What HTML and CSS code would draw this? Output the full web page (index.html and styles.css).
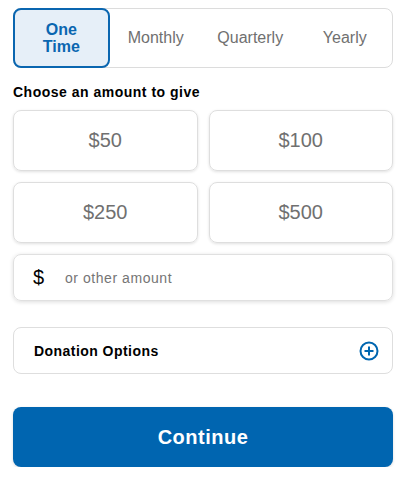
FILE: index.html
```html
<!DOCTYPE html>
<html>
<head>
<meta charset="utf-8">
<link rel="stylesheet" href="styles.css">
</head>
<body>
<div class="page">
  <div class="tabs">
    <div class="tab active">One<br>Time</div>
    <div class="tab">Monthly</div>
    <div class="tab">Quarterly</div>
    <div class="tab">Yearly</div>
  </div>
  <div class="heading">Choose an amount to give</div>
  <div class="amounts">
    <div class="amount">$50</div>
    <div class="amount">$100</div>
    <div class="amount">$250</div>
    <div class="amount">$500</div>
  </div>
  <div class="other">
    <span class="dollar">$</span>
    <span class="placeholder">or other amount</span>
  </div>
  <div class="options">
    <span class="options-label">Donation Options</span>
    <svg class="plus" width="20" height="20" viewBox="0 0 20 20">
      <circle cx="10" cy="10" r="8.5" fill="none" stroke="#0066b0" stroke-width="2"/>
      <path d="M10 5.5v9M5.5 10h9" stroke="#0066b0" stroke-width="2" fill="none"/>
    </svg>
  </div>
  <button class="continue">Continue</button>
</div>
</body>
</html>
```

FILE: styles.css
```css
* { box-sizing: border-box; }
body {
  margin: 0;
  background: #fff;
  font-family: "Liberation Sans", Arial, sans-serif;
}
.page {
  padding: 8px 9px 0 13px;
  width: 402px;
}
.tabs {
  display: grid;
  grid-template-columns: repeat(4, 1fr);
  height: 60px;
  border: 1px solid #dcdcdc;
  border-radius: 8px;
}
.tab {
  display: flex;
  align-items: center;
  justify-content: center;
  text-align: center;
  font-size: 16px;
  color: #707070;
}
.tab.active {
  margin: -1px;
  border: 2px solid #0a66b0;
  border-radius: 8px;
  background: #e6eff8;
  color: #0a66b0;
  font-weight: bold;
  line-height: 17px;
}
.heading {
  margin-top: 16px;
  font-size: 14px;
  font-weight: bold;
  letter-spacing: 0.5px;
  color: #000;
  line-height: 16px;
}
.amounts {
  margin-top: 10px;
  display: grid;
  grid-template-columns: 1fr 1fr;
  gap: 11px;
}
.amount {
  height: 61px;
  border: 1px solid #dedede;
  border-radius: 8px;
  box-shadow: 0 1px 3px rgba(0,0,0,0.12);
  display: flex;
  align-items: center;
  justify-content: center;
  font-size: 20px;
  color: #707070;
}
.other {
  margin-top: 11px;
  height: 47px;
  border: 1px solid #e0e0e0;
  border-radius: 8px;
  box-shadow: 0 1px 4px rgba(0,0,0,0.14);
  display: flex;
  align-items: center;
  padding-left: 19px;
}
.dollar {
  font-size: 20px;
  color: #000;
  width: 32px;
}
.placeholder {
  font-size: 14px;
  letter-spacing: 0.55px;
  color: #757575;
}
.options {
  margin-top: 26px;
  height: 47px;
  border: 1px solid #dedede;
  border-radius: 8px;
  display: flex;
  align-items: center;
  justify-content: space-between;
  padding: 0 13px 0 20px;
}
.options-label {
  font-size: 14px;
  font-weight: bold;
  letter-spacing: 0.45px;
  color: #000;
}
.plus { display: block; }
.continue {
  display: block;
  margin-top: 33px;
  width: 100%;
  height: 60px;
  border: none;
  border-radius: 8px;
  background: #0065b0;
  color: #fff;
  font-family: "Liberation Sans", Arial, sans-serif;
  font-size: 20px;
  font-weight: bold;
  letter-spacing: 0.5px;
  box-shadow: 0 1px 3px rgba(0,0,0,0.15);
}
```
